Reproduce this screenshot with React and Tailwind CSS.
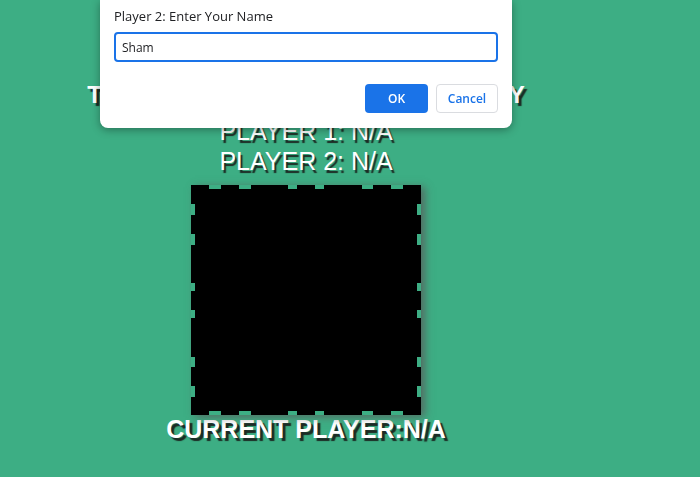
import { useState } from "react";

const notches = [
  [18, 12],
  [48, 12],
  [97, 9],
  [124, 9],
  [171, 11],
  [200, 12],
];

const BoardNotches = () => (
  <svg className="absolute inset-0 pointer-events-none" width="230" height="230" viewBox="0 0 230 230">
    {notches.map(([p, l]) => (
      <g key={p} fill="#3dae84">
        <rect x={p} y={0} width={l} height={4} />
        <rect x={p} y={226} width={l} height={4} />
        <rect x={0} y={p + 1} width={4} height={l - 1} />
        <rect x={226} y={p + 1} width={4} height={l - 1} />
      </g>
    ))}
  </svg>
);

const App = () => {
  const [name, setName] = useState("Sham");
  const cells = Array.from({ length: 9 });

  return (
    <div className="min-h-[477px] bg-[#3dae84] text-white font-['Liberation_Sans',Arial,sans-serif] overflow-hidden">
      <div className="w-[612px] flex flex-col items-center pt-[81px]">
        {/* Game header */}
        <h1 className="text-[24px] leading-[28px] font-bold whitespace-nowrap [text-shadow:3px_3px_1px_#1c2b24]">
          TIC TAC TOE GAME MADE BY SHAMY
        </h1>
        <p className="mt-[8px] text-[25px] leading-[28px] [text-shadow:2px_3px_1px_#1c2b24]">PLAYER 1: N/A</p>
        <p className="mt-[2px] text-[25px] leading-[28px] [text-shadow:2px_3px_1px_#1c2b24]">PLAYER 2: N/A</p>

        {/* Board */}
        <div className="relative mt-[10px] w-[230px] h-[230px] grid grid-cols-3 grid-rows-3 bg-black shadow-[4px_2px_8px_rgba(90,90,90,0.8)]">
          {cells.map((_, i) => (
            <div key={i} className="bg-black" />
          ))}
          <BoardNotches />
        </div>

        <p className="text-[25px] leading-[28px] font-bold whitespace-nowrap [text-shadow:3px_3px_1px_#1c2b24]">CURRENT PLAYER:N/A</p>
      </div>

      {/* Prompt dialog */}
      <div className="fixed top-0 left-[100px] w-[412px] h-[128px] bg-white rounded-b-[8px] shadow-[0_2px_8px_rgba(0,0,0,0.35)] px-[14px] pt-[8px] font-['Open_Sans','Noto_Sans',sans-serif] text-[#202124]">
        <div className="text-[13px] leading-[16px]">Player 2: Enter Your Name</div>
        <input
          value={name}
          onChange={(e) => setName(e.target.value)}
          className="mt-[8px] w-[384px] h-[30px] rounded-[4px] border-2 border-[#1a73e8] px-[6px] text-[12px] outline-none"
        />
        <div className="mt-[22px] flex justify-end gap-[8px]">
          <button className="w-[63px] h-[29px] rounded-[4px] bg-[#1a73e8] text-white text-[12px] font-semibold">OK</button>
          <button className="w-[62px] h-[29px] rounded-[4px] border border-[#dadce0] bg-white text-[#1a73e8] text-[12px] font-semibold">Cancel</button>
        </div>
      </div>
    </div>
  );
};

export default App;
